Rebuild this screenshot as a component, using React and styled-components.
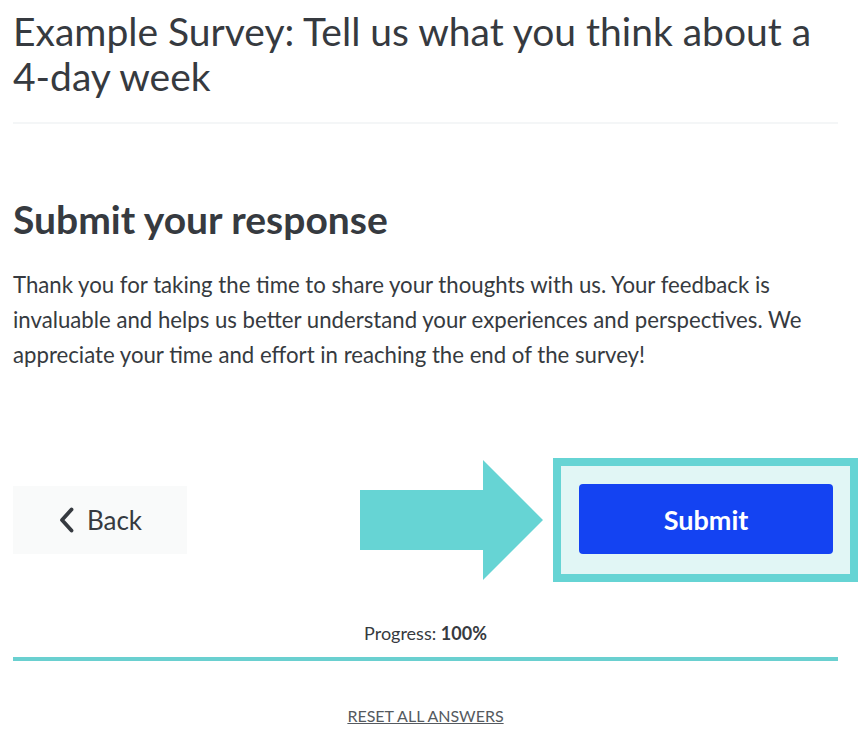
import React from 'react';
import styled, { createGlobalStyle } from 'styled-components';

const GlobalStyle = createGlobalStyle`
  body {
    margin: 0;
    background: #ffffff;
    font-family: Lato, "Open Sans", sans-serif;
    color: #333840;
  }
`;

const Page = styled.div`
  width: 825px;
  padding: 9px 0 0 13px;
  display: flex;
  flex-direction: column;
`;

const Title = styled.h1`
  margin: 0;
  font-size: 39px;
  font-weight: 400;
  line-height: 45px;
  color: #363a40;

  span {
    white-space: nowrap;
  }
`;

const Divider = styled.hr`
  margin: 23px 0 0;
  border: none;
  height: 2px;
  background: #f4f6f7;
`;

const Heading = styled.h2`
  margin: 72px 0 0;
  font-size: 39px;
  font-weight: 700;
  line-height: 46px;
  color: #363a40;
`;

const Text = styled.p`
  margin: 25px 0 0;
  font-size: 22.2px;
  line-height: 35px;
  color: #363a40;
`;

const ButtonRow = styled.div`
  margin-top: 86px;
  margin-right: -20px;
  display: flex;
  align-items: center;
`;

const BackButton = styled.button`
  width: 174px;
  height: 68px;
  border: none;
  background: #f9fafa;
  display: flex;
  align-items: center;
  justify-content: center;
  gap: 12px;
  font-family: inherit;
  font-size: 26px;
  color: #363a40;
  padding: 0;
`;

const Arrow = styled.svg`
  margin-left: auto;
  margin-right: 10px;
  display: block;
`;

const Highlight = styled.div`
  border: 8px solid #66d4d4;
  background: #e1f6f5;
  padding: 18px 17px 20px 18px;
`;

const SubmitButton = styled.button`
  width: 254px;
  height: 70px;
  border: none;
  border-radius: 4px;
  background: #1443f2;
  color: #ffffff;
  font-family: inherit;
  font-weight: 700;
  font-size: 27px;
`;

const Progress = styled.div`
  margin-top: 40px;
  text-align: center;
  font-size: 18px;
  color: #363a40;

  b {
    font-weight: 700;
  }
`;

const Bar = styled.div`
  margin-top: 13px;
  height: 4px;
  background: #6ad0d0;
`;

const Reset = styled.a`
  margin-top: 45px;
  align-self: center;
  font-size: 16px;
  color: #555a60;
  text-decoration: underline;
`;

export default function App() {
  return (
    <>
      <GlobalStyle />
      <Page>
        <Title>
          Example Survey: Tell us what you think about a <span>4-day week</span>
        </Title>
        <Divider />
        <Heading>Submit your response</Heading>
        <Text>
          Thank you for taking the time to share your thoughts with us. Your feedback is invaluable and helps us
          better understand your experiences and perspectives. We appreciate your time and effort in reaching the
          end of the survey!
        </Text>
        <ButtonRow>
          <BackButton>
            <svg width="17" height="28" viewBox="0 0 17 28">
              <path d="M13.5 3.5 L4 14 L13.5 24.5" fill="none" stroke="#363a40" strokeWidth="3.8" strokeLinecap="round" strokeLinejoin="round" />
            </svg>
            Back
          </BackButton>
          <Arrow width="183" height="120" viewBox="0 0 183 120">
            <polygon points="0,30 123,30 123,0 183,60 123,120 123,90 0,90" fill="#66d4d4" />
          </Arrow>
          <Highlight>
            <SubmitButton>Submit</SubmitButton>
          </Highlight>
        </ButtonRow>
        <Progress>
          Progress: <b>100%</b>
        </Progress>
        <Bar />
        <Reset>RESET ALL ANSWERS</Reset>
      </Page>
    </>
  );
}
